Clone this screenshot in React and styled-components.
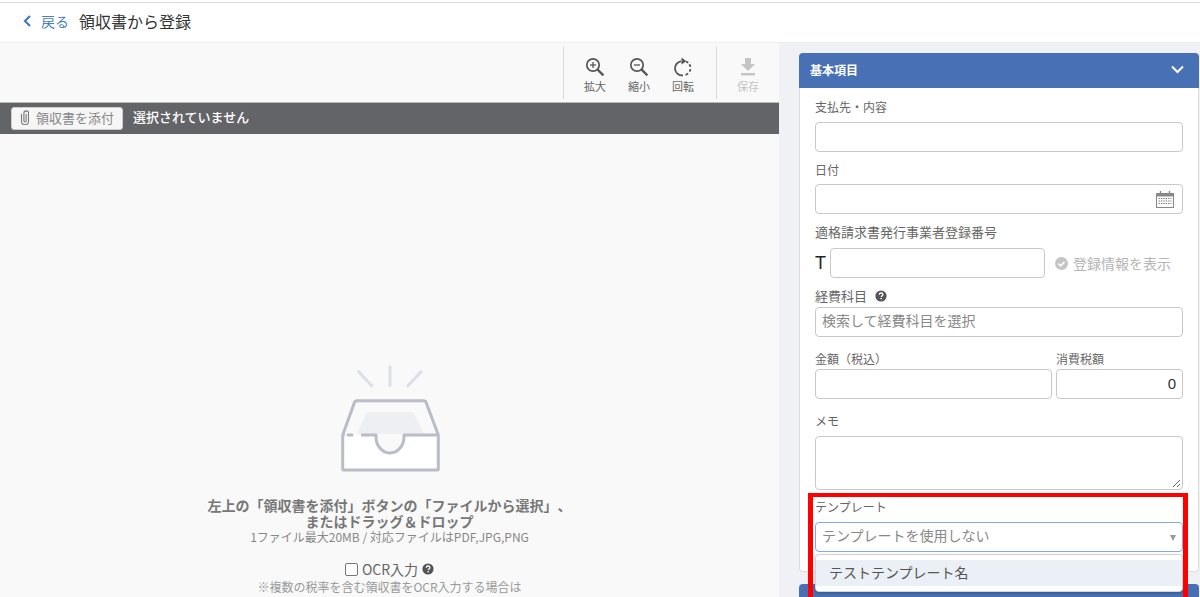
import React from "react";
import styled, { createGlobalStyle } from "styled-components";

const Global = createGlobalStyle`
  html, body { margin: 0; padding: 0; height: 597px; overflow: hidden; background: #fff; }
  body { font-family: "Noto Sans CJK JP", "Noto Sans", sans-serif; color: #555; text-spacing-trim: space-all; }
  * { box-sizing: border-box; }
`;

const Page = styled.div`
  position: relative;
  width: 1200px;
  height: 597px;
  overflow: hidden;
  display: flex;
  flex-direction: column;
  border-top: 1px solid #dcdce0;
  margin-top: 2px;
`;
const TopBar = styled.header`
  height: 40px;
  flex: none;
  display: flex;
  align-items: center;
  padding: 0 0 3px 23px;
  background: #fff;
  border-bottom: 1px solid #eee;
`;
const Back = styled.a`
  display: flex;
  align-items: center;
  color: #4a7fc9;
  font-size: 14px;
  gap: 9px;
  margin-right: 10px;
`;
const Title = styled.h1`
  margin: 0;
  font-size: 16px;
  font-weight: 400;
  color: #333;
`;
const Main = styled.div`
  flex: 1;
  display: flex;
  min-height: 0;
`;
const Left = styled.section`
  width: 779px;
  flex: none;
  background: #f9f9f9;
  display: flex;
  flex-direction: column;
`;
const Toolbar = styled.div`
  height: 59px;
  flex: none;
  display: flex;
  justify-content: flex-end;
  padding: 4px 9px 3px 0;
`;
const ToolGroup = styled.div`
  display: flex;
  border-left: 1px solid #d8d8d8;
  padding: ${(p) => p.$pad};
`;
const Tool = styled.button`
  width: 44px;
  border: 0;
  padding: 10px 0 0;
  background: none;
  font: inherit;
  font-size: 11px;
  line-height: 14px;
  color: ${(p) => (p.$off ? "#c4c4c4" : "#666")};
  display: flex;
  flex-direction: column;
  align-items: center;
  gap: 2px;
`;
const FileBar = styled.div`
  height: 32px;
  flex: none;
  background: #636468;
  border-top: 1px solid #bbb;
  display: flex;
  align-items: center;
  padding: 0 0 1px 11px;
  gap: 10px;
`;
const Attach = styled.button`
  height: 23px;
  width: 112px;
  border: 1px solid #ccc;
  border-radius: 3px;
  background: #f6f6f6;
  color: #888;
  font: inherit;
  font-size: 13px;
  display: flex;
  align-items: center;
  justify-content: center;
  gap: 6px;
  padding: 0 0 1px;
`;
const FileName = styled.span`
  color: #fff;
  font-size: 13px;
  font-weight: 500;
  margin-top: -3px;
`;
const Drop = styled.div`
  flex: 1;
  display: flex;
  flex-direction: column;
  align-items: center;
  padding-top: 230px;
  text-align: center;
`;
const Lead = styled.p`
  margin: 23px 0 0;
  font-size: 14px;
  line-height: 16px;
  font-weight: 700;
  color: #777;
`;
const Sub = styled.p`
  margin: 0;
  font-size: 12px;
  line-height: 16px;
  color: #888;
`;
const OcrRow = styled.label`
  display: flex;
  align-items: center;
  margin-top: 14px;
  height: 20px;
  font-size: 14px;
  color: #666;
  gap: 4px;
`;
const Box = styled.span`
  width: 13px;
  height: 13px;
  border: 1px solid #767676;
  border-radius: 2px;
  background: #fff;
`;
const Note = styled.p`
  margin: 0;
  font-size: 12px;
  line-height: 16px;
  color: #999;
`;
const Right = styled.aside`
  flex: 1;
  background: #eff1f4;
  padding: 10px 1px 0 20px;
  display: flex;
  flex-direction: column;
  gap: 12px;
`;
const PanelHead = styled.div`
  height: 35px;
  flex: none;
  background: #4771b4;
  border-radius: 4px 4px 0 0;
  color: #fff;
  font-size: 12px;
  font-weight: 700;
  display: flex;
  align-items: center;
  justify-content: space-between;
  padding: 0 15px 2px 11px;
`;
const PanelBody = styled.div`
  height: 484px;
  flex: none;
  background: #fff;
  border: 1px solid #ddd;
  border-top: 0;
  border-radius: 0 0 4px 4px;
  padding: 10px 15px 0;
`;
const Field = styled.div`
  position: relative;
  margin-top: ${(p) => p.$top || 0}px;
`;
const Label = styled.div`
  font-size: ${(p) => p.$size || 12}px;
  line-height: 18px;
  color: #666;
  display: flex;
  align-items: center;
  gap: 8px;
  margin-bottom: ${(p) => p.$gap}px;
`;
const Input = styled.div`
  height: ${(p) => p.$h || 30}px;
  width: ${(p) => p.$w || "auto"};
  border: 1px solid ${(p) => (p.$focus ? "#85a9dc" : "#c8c8c8")};
  border-radius: 4px;
  background: #fff;
  font-size: 14px;
  line-height: 24px;
  padding: 0 6px 4px;
  color: #888;
  position: relative;
  display: flex;
  align-items: center;
  justify-content: ${(p) => (p.$end ? "flex-end" : "space-between")};
`;
const Row = styled.div`
  display: flex;
  align-items: center;
`;
const TMark = styled.span`
  font-family: "Liberation Sans", sans-serif;
  font-size: 18px;
  color: #222;
  width: 15px;
`;
const Verify = styled.span`
  display: flex;
  align-items: center;
  gap: 4px;
  margin-left: 9px;
  font-size: 14px;
  color: #b5b5b5;
`;
const Cols = styled.div`
  display: grid;
  grid-template-columns: 237px 127px;
  gap: 4px;
`;
const Value = styled.span`
  color: #333;
  font-size: 15px;
  font-family: "Liberation Sans", sans-serif;
  margin-top: 4px;
`;
const Arrow = styled.span`
  width: 0;
  height: 0;
  border: 3.5px solid transparent;
  border-top: 6px solid #999;
  border-bottom: 0;
  margin-top: 5px;
`;
const Grip = styled.svg`
  position: absolute;
  right: 1px;
  bottom: 1px;
`;
const Calendar = styled.svg`
  margin: 4px 2px 0 0;
`;
const Menu = styled.div`
  position: absolute;
  left: 0;
  right: 0;
  top: 56px;
  height: 38px;
  background: #fff;
  border: 1px solid #d5d5d5;
  border-radius: 4px;
  box-shadow: 0 1px 3px rgba(0, 0, 0, 0.25);
  padding-top: 5px;
`;
const Option = styled.div`
  height: 26px;
  background: #ebeff6;
  color: #555;
  font-size: 14px;
  line-height: 24px;
  padding-left: 13px;
`;
const Highlight = styled.div`
  position: absolute;
  left: 808px;
  top: 490px;
  width: 380px;
  height: 112px;
  border: solid #f00;
  border-width: 4px 5px;
  pointer-events: none;
`;

const Help = ({ c = "#555" }) => (
  <svg width="12" height="12" viewBox="0 0 12 12">
    <circle cx="6" cy="6" r="5.6" fill={c} />
    <path d="M4.2 4.7C4.3 3.6 5 3 6.1 3c1.1 0 1.8.6 1.8 1.5 0 .8-.5 1.1-1 1.5-.4.3-.6.5-.6 1" fill="none" stroke="#fff" strokeWidth="1.3" />
    <rect x="5.5" y="7.9" width="1.4" height="1.4" fill="#fff" />
  </svg>
);

const Zoom = ({ minus }) => (
  <svg width="20" height="20" viewBox="0 0 20 20" fill="none" stroke="#555" strokeWidth="1.7">
    <circle cx="8" cy="8" r="6.2" />
    <path d="M12.6 12.6L18.4 18.4" strokeWidth="2.2" />
    <path d="M5 8h6" strokeWidth="1.3" />
    {!minus && <path d="M8 5v6" strokeWidth="1.3" />}
  </svg>
);

export default function App() {
  return (
    <>
      <Global />
      <Page>
        <TopBar>
          <Back>
            <svg width="9" height="12" viewBox="0 0 9 12" fill="none" stroke="#3f78c8" strokeWidth="2.2">
              <path d="M7 1L2 6l5 5" />
            </svg>
            戻る
          </Back>
          <Title>領収書から登録</Title>
        </TopBar>
        <Main>
          <Left>
            <Toolbar>
              <ToolGroup $pad="0 11px 0 9px">
                <Tool>
                  <Zoom />
                  拡大
                </Tool>
                <Tool>
                  <Zoom minus />
                  縮小
                </Tool>
                <Tool>
                  <svg width="20" height="20" viewBox="0 0 20 20" fill="none" stroke="#555" strokeWidth="1.8">
                    <path d="M8 4.4A7 7 0 0 0 10 18.3" />
                    <path d="M12.5 18a7 7 0 0 0 2.6-1.6M16.6 14.6a7 7 0 0 0 .8-2.6M17.3 9.8a7 7 0 0 0-.9-2.6M15.2 5.8a7 7 0 0 0-2-1.2" />
                    <path d="M8.5 0.4l4.8 3.8-4.8 3.4z" fill="#555" stroke="none" />
                  </svg>
                  回転
                </Tool>
              </ToolGroup>
              <ToolGroup $pad="0 0 0 9px">
                <Tool $off>
                  <svg width="20" height="20" viewBox="0 0 20 20" fill="#c4c4c4">
                    <path d="M7 1h6v6h4l-7 7-7-7h4z" />
                    <rect x="3" y="16" width="14" height="2.4" />
                  </svg>
                  保存
                </Tool>
              </ToolGroup>
            </Toolbar>
            <FileBar>
              <Attach>
                <svg width="10" height="15" viewBox="0 0 10 15" fill="none" stroke="#777" strokeWidth="1.1">
                  <path d="M1.5 4v7.2a3.5 3.5 0 0 0 7 0V3.2a2.3 2.3 0 0 0-4.6 0v7.6a1.1 1.1 0 0 0 2.2 0V4" />
                </svg>
                領収書を添付
              </Attach>
              <FileName>選択されていません</FileName>
            </FileBar>
            <Drop>
              <svg width="102" height="110" viewBox="0 0 102 110" fill="none">
                <path d="M18.7 6.7l15 16M51 1.7v21M83 6.7l-15 16" stroke="#dcdfe6" strokeWidth="3" />
                <path d="M18 70l9-20a3 3 0 0 1 3-2h42a3 3 0 0 1 3 2l10 20z" fill="#eeeff3" />
                <path d="M5 71h32v2a14 16 0 0 0 28 0v-2h34.3v35H3.7z" fill="#fff" />
                <path d="M3.7 71L15.3 39a3 3 0 0 1 3-2.3h66a3 3 0 0 1 3 2.3L99.3 71" stroke="#babcc8" strokeWidth="3" strokeLinejoin="round" />
                <path d="M22 71h15v2a14 16 0 0 0 28 0v-2h34.3v34a1 1 0 0 1-1 1H4.7a1 1 0 0 1-1-1V71h2" stroke="#babcc8" strokeWidth="3" strokeLinejoin="round" />
                <path d="M9 71h4" stroke="#babcc8" strokeWidth="3" strokeLinecap="round" />
              </svg>
              <Lead>
                左上の「領収書を添付」ボタンの「ファイルから選択」、
                <br />
                またはドラッグ＆ドロップ
              </Lead>
              <Sub>1ファイル最大20MB / 対応ファイルはPDF,JPG,PNG</Sub>
              <OcrRow>
                <Box />
                OCR入力
                <Help />
              </OcrRow>
              <Note>※複数の税率を含む領収書をOCR入力する場合は</Note>
            </Drop>
          </Left>
          <Right>
            <div>
              <PanelHead>
                基本項目
                <svg width="13" height="9" viewBox="0 0 13 9" fill="none" stroke="#fff" strokeWidth="2">
                  <path d="M1 1.5l5.5 5.5L12 1.5" />
                </svg>
              </PanelHead>
              <PanelBody>
                <Field>
                  <Label $gap={6}>支払先・内容</Label>
                  <Input />
                </Field>
                <Field $top={9}>
                  <Label $gap={5}>日付</Label>
                  <Input>
                    <span />
                    <Calendar width="18" height="17" viewBox="0 0 18 17">
                      <rect x="0.5" y="2.5" width="17" height="14" fill="#fff" stroke="#888" />
                      <rect x="0.5" y="2.5" width="17" height="3" fill="#888" />
                      <path d="M4.5 0v4M13.5 0v4" stroke="#888" strokeWidth="1.4" />
                      <path d="M2.5 7.5h13M2.5 10h13M2.5 12.5h13" stroke="#777" strokeWidth="1.2" strokeDasharray="1.4 1" />
                    </Calendar>
                  </Input>
                </Field>
                <Field $top={9}>
                  <Label $gap={7} $size={13}>適格請求書発行事業者登録番号</Label>
                  <Row>
                    <TMark>T</TMark>
                    <Input $w="215px" />
                    <Verify>
                      <svg width="15" height="15" viewBox="0 0 15 15">
                        <circle cx="7.5" cy="7.5" r="6.5" fill="#c4c4c4" />
                        <path d="M4.3 7.6l2.3 2.3 4-4" fill="none" stroke="#fff" strokeWidth="1.7" />
                      </svg>
                      登録情報を表示
                    </Verify>
                  </Row>
                </Field>
                <Field $top={9}>
                  <Label $gap={2} $size={13}>
                    経費科目
                    <Help />
                  </Label>
                  <Input>検索して経費科目を選択</Input>
                </Field>
                <Field $top={13}>
                  <Cols>
                    <div>
                      <Label $gap={1}>金額（税込）</Label>
                      <Input />
                    </div>
                    <div>
                      <Label $gap={1}>消費税額</Label>
                      <Input $end>
                        <Value>0</Value>
                      </Input>
                    </div>
                  </Cols>
                </Field>
                <Field $top={13}>
                  <Label $gap={6}>メモ</Label>
                  <Input $h={54}>
                    <Grip width="9" height="9" viewBox="0 0 9 9" stroke="#666" fill="none">
                      <path d="M1 8l7-7M5 8l3-3" />
                    </Grip>
                  </Input>
                </Field>
                <Field $top={8}>
                  <Label $gap={6}>テンプレート</Label>
                  <Input $focus>
                    テンプレートを使用しない
                    <Arrow />
                  </Input>
                  <Menu>
                    <Option>テストテンプレート名</Option>
                  </Menu>
                </Field>
              </PanelBody>
            </div>
            <PanelHead />
          </Right>
        </Main>
        <Highlight />
      </Page>
    </>
  );
}
